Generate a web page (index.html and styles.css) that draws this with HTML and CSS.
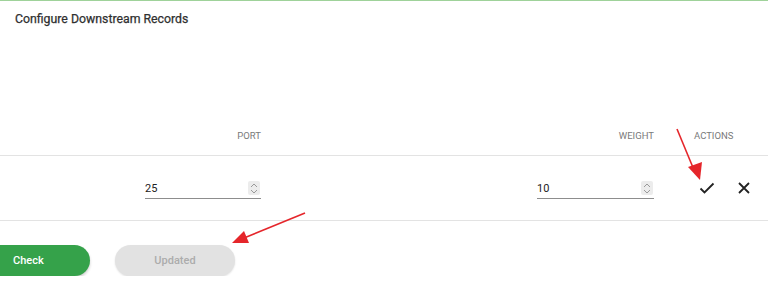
FILE: index.html
```html
<!DOCTYPE html>
<html lang="en">
<head>
<meta charset="UTF-8">
<meta name="viewport" content="width=device-width, initial-scale=1.0">
<title>Configure Downstream Records</title>
<link rel="stylesheet" href="styles.css">
</head>
<body>
<div class="panel">
    <h2 class="panel-title">Configure Downstream Records</h2>

    <div class="records">
        <div class="records-row records-head">
            <div></div>
            <div class="cell-right">Port</div>
            <div></div>
            <div class="cell-right">Weight</div>
            <div class="cell-actions">Actions</div>
        </div>
        <div class="records-row records-body">
            <div></div>
            <div class="field">
                <span class="field-value">25</span>
                <span class="spinner">
                    <svg width="8" height="11" viewBox="0 0 8 11"><path d="M1 4 L4 1 L7 4 M1 7 L4 10 L7 7" fill="none" stroke="#9a9a9a" stroke-width="1"/></svg>
                </span>
            </div>
            <div></div>
            <div class="field">
                <span class="field-value">10</span>
                <span class="spinner">
                    <svg width="8" height="11" viewBox="0 0 8 11"><path d="M1 4 L4 1 L7 4 M1 7 L4 10 L7 7" fill="none" stroke="#9a9a9a" stroke-width="1"/></svg>
                </span>
            </div>
            <div class="cell-actions action-icons">
                <svg class="icon-check" width="16" height="12" viewBox="0 0 16 12"><path d="M1.5 6.5 L5.5 10.5 L14.5 1.5" fill="none" stroke="#222" stroke-width="1.8"/></svg>
                <svg class="icon-close" width="12" height="12" viewBox="0 0 12 12"><path d="M1 1 L11 11 M11 1 L1 11" fill="none" stroke="#222" stroke-width="1.8"/></svg>
            </div>
        </div>
    </div>

    <div class="actions-bar">
        <button class="btn btn-green">Check</button>
        <button class="btn btn-disabled" disabled>Updated</button>
    </div>
</div>

<!-- annotation arrows -->
<svg class="annotations" width="768" height="290" viewBox="0 0 768 290">
    <line x1="677" y1="129" x2="694" y2="170" stroke="#e5262b" stroke-width="1.6"/>
    <polygon points="700,180 688,167 702,162" fill="#e5262b"/>
    <line x1="305" y1="213" x2="244" y2="238" stroke="#e5262b" stroke-width="1.6"/>
    <polygon points="232,243 244,231 249,243" fill="#e5262b"/>
</svg>
</body>
</html>
```

FILE: styles.css
```css
body {
    margin: 0;
    font-family: Roboto, "Liberation Sans", Arial, sans-serif;
    background-color: #fff;
    border-top: 1px solid #9fd29a;
    overflow: hidden;
}
.panel {
    position: relative;
}
.panel-title {
    margin: 0;
    padding: 10px 15px 0;
    font-size: 12.3px;
    line-height: 16px;
    font-weight: 400;
    color: #2f2f2f;
    -webkit-text-stroke: 0.25px #2f2f2f;
}
.records {
    margin-top: 93px;
}
.records-row {
    display: grid;
    grid-template-columns: 145px 116px 1fr 117px 114px;
    border-bottom: 1px solid #e3e3e3;
}
.records-head {
    height: 36px;
    align-items: end;
    padding-bottom: 13px;
    box-sizing: border-box;
    font-size: 9.5px;
    line-height: 12px;
    font-weight: 400;
    color: #7a7a7a;
    text-transform: uppercase;
}
.cell-right {
    text-align: right;
}
.cell-actions {
    padding-left: 40px;
}
.records-body {
    height: 64px;
    align-items: center;
}
.field {
    display: flex;
    align-items: center;
    justify-content: space-between;
    height: 20px;
    border-bottom: 1px solid #8d8d8d;
    font-size: 11px;
    color: #222;
    margin-top: 1px;
}
.spinner {
    display: flex;
    align-items: center;
    justify-content: center;
    width: 12px;
    height: 14px;
    margin-right: 1px;
    background-color: #ececec;
    border-radius: 2px;
}
.action-icons {
    display: flex;
    align-items: center;
    padding-left: 45px;
    gap: 23px;
}
.actions-bar {
    display: flex;
    gap: 25px;
    margin-top: 24px;
    margin-left: -20px;
}
.btn {
    height: 31px;
    border: none;
    border-radius: 16px;
    font-family: inherit;
    font-size: 11px;
    font-weight: 500;
    cursor: pointer;
}
.btn-green {
    width: 110px;
    padding-left: 33px;
    text-align: left;
    background-color: #35a24a;
    color: #fff;
    box-shadow: 0 2px 3px rgba(0, 0, 0, 0.2);
}
.btn-disabled {
    width: 120px;
    background-color: #e2e2e2;
    color: #acacac;
    box-shadow: 0 1px 2px rgba(0, 0, 0, 0.12);
    cursor: default;
}
.annotations {
    position: absolute;
    top: 0;
    left: 0;
    pointer-events: none;
}
```
